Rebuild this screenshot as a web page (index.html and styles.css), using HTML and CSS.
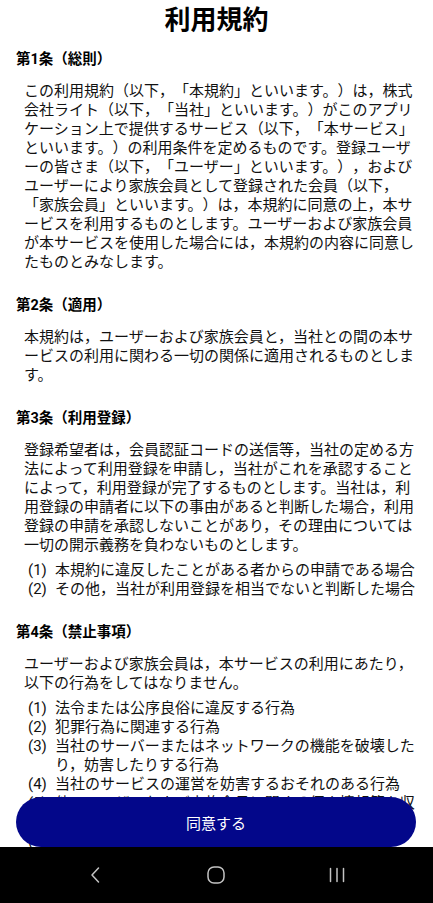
FILE: index.html
```html
<!DOCTYPE html>
<html lang="ja">
<head>
<meta charset="utf-8">
<title>利用規約</title>
<link rel="stylesheet" href="styles.css">
</head>
<body>
<div class="screen">
  <main class="content">
    <h1 class="title">利用規約</h1>

    <section class="article">
      <h2 class="art-head">第1条（総則）</h2>
      <p class="art-body">この利用規約（以下，「本規約」といいます。）は，株式会社ライト（以下，「当社」といいます。）がこのアプリケーション上で提供するサービス（以下，「本サービス」といいます。）の利用条件を定めるものです。登録ユーザーの皆さま（以下，「ユーザー」といいます。），およびユーザーにより家族会員として登録された会員（以下，「家族会員」といいます。）は，本規約に同意の上，本サービスを利用するものとします。ユーザーおよび家族会員が本サービスを使用した場合には，本規約の内容に同意したものとみなします。</p>
    </section>

    <section class="article">
      <h2 class="art-head">第2条（適用）</h2>
      <p class="art-body">本規約は，ユーザーおよび家族会員と，当社との間の本サービスの利用に関わる一切の関係に適用されるものとします。</p>
    </section>

    <section class="article">
      <h2 class="art-head">第3条（利用登録）</h2>
      <p class="art-body">登録希望者は，会員認証コードの送信等，当社の定める方法によって利用登録を申請し，当社がこれを承認することによって，利用登録が完了するものとします。当社は，利用登録の申請者に以下の事由があると判断した場合，利用登録の申請を承認しないことがあり，その理由については一切の開示義務を負わないものとします。</p>
      <ol class="art-list">
        <li><span class="num">(1)</span><span class="txt">本規約に違反したことがある者からの申請である場合</span></li>
        <li><span class="num">(2)</span><span class="txt">その他，当社が利用登録を相当でないと判断した場合</span></li>
      </ol>
    </section>

    <section class="article">
      <h2 class="art-head">第4条（禁止事項）</h2>
      <p class="art-body">ユーザーおよび家族会員は，本サービスの利用にあたり，以下の行為をしてはなりません。</p>
      <ol class="art-list">
        <li><span class="num">(1)</span><span class="txt">法令または公序良俗に違反する行為</span></li>
        <li><span class="num">(2)</span><span class="txt">犯罪行為に関連する行為</span></li>
        <li><span class="num">(3)</span><span class="txt">当社のサーバーまたはネットワークの機能を破壊したり，妨害したりする行為</span></li>
        <li><span class="num">(4)</span><span class="txt">当社のサービスの運営を妨害するおそれのある行為</span></li>
        <li><span class="num">(5)</span><span class="txt">他のユーザーおよび家族会員に関する個人情報等を収集または蓄積する行為</span></li>
        <li><span class="num">(6)</span><span class="txt">他のユーザーおよび家族会員に成りすます行為</span></li>
      </ol>
    </section>

    <button class="agree" type="button">同意する</button>
  </main>

  <nav class="navbar">
    <svg class="nav-icon" width="20" height="20" viewBox="0 0 20 20" aria-hidden="true">
      <path d="M13.5 3 L7 10 L13.5 17" fill="none" stroke="#c4c4c4" stroke-width="1.5" stroke-linecap="round" stroke-linejoin="round"/>
    </svg>
    <svg class="nav-icon" width="20" height="20" viewBox="0 0 20 20" aria-hidden="true">
      <rect x="2" y="2" width="16" height="16" rx="6" ry="6" fill="none" stroke="#c4c4c4" stroke-width="1.5"/>
    </svg>
    <svg class="nav-icon" width="20" height="20" viewBox="0 0 20 20" aria-hidden="true">
      <path d="M3.5 3.5 V16.5 M10 3.5 V16.5 M16.5 3.5 V16.5" fill="none" stroke="#c4c4c4" stroke-width="1.5" stroke-linecap="round"/>
    </svg>
  </nav>
</div>
</body>
</html>
```

FILE: styles.css
```css
* {
  box-sizing: border-box;
}

html, body {
  margin: 0;
  padding: 0;
  background: #ffffff;
}

body {
  font-family: "Roboto", "Noto Sans CJK JP", sans-serif;
  color: #111111;
  text-spacing-trim: space-all;
}

.screen {
  width: 433px;
  height: 903px;
  display: flex;
  flex-direction: column;
  overflow: hidden;
}

.content {
  position: relative;
  flex: 1;
  overflow: hidden;
  padding: 0 16px 0 16px;
}

.title {
  margin: 0;
  padding-top: 2px;
  text-align: center;
  font-size: 26px;
  line-height: 36px;
  font-weight: 700;
  color: #000000;
}

.article {
  margin-top: 12px;
}

.article + .article {
  margin-top: 24px;
}

.art-head {
  margin: 0;
  font-size: 14.5px;
  line-height: 20px;
  font-weight: 700;
  color: #000000;
}

.art-body {
  margin: 12px 0 0 8px;
  font-size: 15px;
  line-height: 19px;
  line-break: normal;
}

.art-list {
  list-style: none;
  margin: 6px 0 0 12px;
  padding: 0;
  font-size: 15px;
  line-height: 19px;
}

.art-list li {
  display: flex;
}

.num {
  flex: 0 0 27px;
}

.txt {
  flex: 1;
}

.agree {
  position: absolute;
  left: 16px;
  right: 17px;
  bottom: 0;
  height: 50px;
  border: none;
  border-radius: 25px;
  background: #03078a;
  color: #ffffff;
  font-family: "Roboto", "Noto Sans CJK JP", sans-serif;
  font-size: 15px;
}

.navbar {
  flex: 0 0 56px;
  background: #000000;
  display: flex;
  align-items: center;
  justify-content: space-between;
  padding: 0 86px 0 85px;
}

.nav-icon {
  display: block;
}
```
